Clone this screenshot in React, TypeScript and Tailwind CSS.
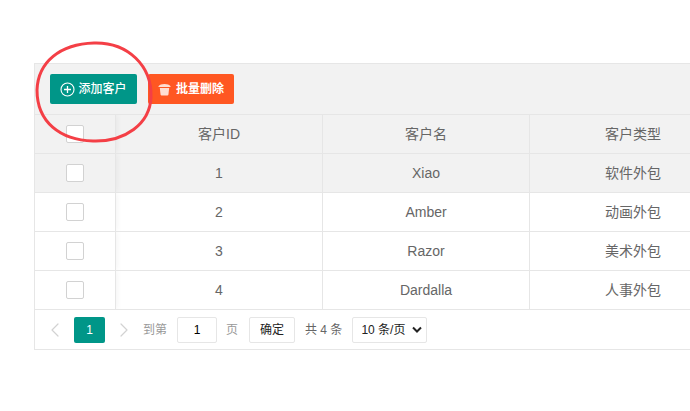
import { ChevronLeft, ChevronRight } from "lucide-react";

const font = { fontFamily: '"Liberation Sans", "Noto Sans CJK SC", sans-serif' };

const rows = [
  { id: 1, name: "Xiao", type: "软件外包", hover: true },
  { id: 2, name: "Amber", type: "动画外包" },
  { id: 3, name: "Razor", type: "美术外包" },
  { id: 4, name: "Dardalla", type: "人事外包" },
];

const Cell = ({ children }: { children: React.ReactNode }) => (
  <div className="w-[207px] shrink-0 flex items-center justify-center border-r border-[#e6e6e6]">{children}</div>
);

const Row = ({ a, b, c, hover }: { a: React.ReactNode; b: string; c: string; hover?: boolean }) => (
  <div className={`flex h-[39px] overflow-hidden border-b border-[#e6e6e6] ${hover ? "bg-[#f2f2f2]" : "bg-white"}`}>
    <div className={`w-[81px] shrink-0 flex items-center justify-center border-r border-[#e6e6e6] shadow-[1px_0_6px_rgba(0,0,0,0.05)] ${hover ? "bg-[#f2f2f2]" : "bg-white"}`}>
      <span className="w-[18px] h-[18px] bg-white border border-[#d2d2d2] rounded-[2px]" />
    </div>
    <Cell>{a}</Cell>
    <Cell>{b}</Cell>
    <Cell>{c}</Cell>
  </div>
);

export default function App() {
  return (
    <div className="relative w-[690px] h-[411px] overflow-hidden bg-white text-[14px] text-[#666]" style={font}>
      <div className="pt-[63px] pl-[34px]">
        <div className="w-[800px] border border-[#e6e6e6]">
          <div className="h-[51px] bg-[#f2f2f2] border-b border-[#e6e6e6] flex items-center pl-[15px] gap-[11px]">
            <button className="h-[30px] w-[87px] bg-[#009688] text-white text-[12px] font-medium rounded-[2px] flex items-center justify-center gap-[3px]">
              <svg width="15" height="15" viewBox="0 0 15 15" fill="none" stroke="white">
                <circle cx="7.5" cy="7.5" r="6.500" strokeWidth="1.1" />
                <path d="M7.500 4v7M4 7.500h7" strokeWidth="1.3" />
              </svg>
              添加客户
            </button>
            <button className="h-[30px] w-[86px] bg-[#ff5722] text-white text-[12px] font-semibold rounded-[2px] flex items-center justify-center gap-[5px]">
              <svg width="13" height="13" viewBox="0 0 13 13" fill="white" fillOpacity="0.8">
                <path d="M.5 3.200C1.500 1.700 3.800 1 6.500 1s5 .7 6 2.200V4H.5z" />
                <path d="M1.800 5h9.400l-.8 6.700c-.1.500-.5.800-1 .8H3.600c-.5 0-.9-.3-1-.8z" />
              </svg>
              批量删除
            </button>
          </div>
          <div className="bg-[#f2f2f2]">
            <Row a="客户ID" b="客户名" c="客户类型" hover />
          </div>
          {rows.map((r) => (
            <Row key={r.id} a={r.id} b={r.name} c={r.type} hover={r.hover} />
          ))}
          <div className="h-[39px] flex items-center bg-white text-[12px] pl-[8px]">
            <ChevronLeft className="w-[24px] h-[24px] text-[#d2d2d2] mr-[7px]" strokeWidth={1.2} />
            <span className="w-[31px] h-[26px] bg-[#009688] text-white rounded-[2px] flex items-center justify-center">1</span>
            <ChevronRight className="w-[24px] h-[24px] text-[#d2d2d2] ml-[7px]" strokeWidth={1.2} />
            <span className="ml-[7px] text-[#999]">到第</span>
            <span className="ml-[10px] w-[40px] h-[26px] border border-[#e6e6e6] rounded-[2px] flex items-center justify-center text-black">1</span>
            <span className="ml-[9px] text-[#999]">页</span>
            <span className="ml-[11px] w-[46px] h-[26px] border border-[#e6e6e6] rounded-[2px] flex items-center justify-center text-[#222]">确定</span>
            <span className="ml-[10px] text-[#666]">共 4 条</span>
            <span className="ml-[10px] w-[75px] h-[26px] border border-[#e6e6e6] rounded-[2px] flex items-center justify-between pl-[8px] pr-[4px] text-[#222]">
              10 条/页
              <svg width="10" height="7" viewBox="0 0 10 7" fill="none" stroke="#222" strokeWidth="2">
                <path d="M1 1.500l4 4 4-4" />
              </svg>
            </span>
          </div>
        </div>
      </div>
      <svg className="absolute left-0 top-0 pointer-events-none" width="170" height="160" fill="none">
        <path
          d="M94 43C128 42 152 66 151 97C150 124 125 142 93 141C60 140 37 122 37 90C38 62 60 44 94 43Z"
          stroke="#f43f46"
          strokeWidth="3"
        />
      </svg>
    </div>
  );
}
